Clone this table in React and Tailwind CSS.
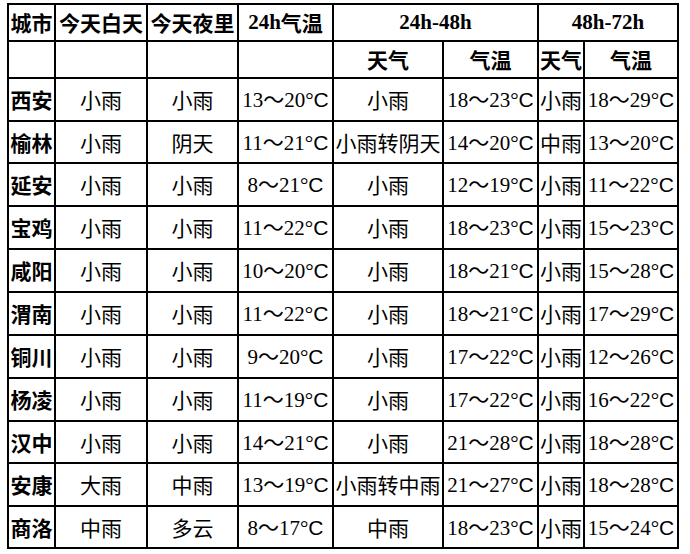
import React from "react";

const rows = [
  ["西安", "小雨", "小雨", "13～20", "小雨", "18～23", "小雨", "18～29"],
  ["榆林", "小雨", "阴天", "11～21", "小雨转阴天", "14～20", "中雨", "13～20"],
  ["延安", "小雨", "小雨", "8～21", "小雨", "12～19", "小雨", "11～22"],
  ["宝鸡", "小雨", "小雨", "11～22", "小雨", "18～23", "小雨", "15～23"],
  ["咸阳", "小雨", "小雨", "10～20", "小雨", "18～21", "小雨", "15～28"],
  ["渭南", "小雨", "小雨", "11～22", "小雨", "18～21", "小雨", "17～29"],
  ["铜川", "小雨", "小雨", "9～20", "小雨", "17～22", "小雨", "12～26"],
  ["杨凌", "小雨", "小雨", "11～19", "小雨", "17～22", "小雨", "16～22"],
  ["汉中", "小雨", "小雨", "14～21", "小雨", "21～28", "小雨", "18～28"],
  ["安康", "大雨", "中雨", "13～19", "小雨转中雨", "21～27", "小雨", "18～28"],
  ["商洛", "中雨", "多云", "8～17", "中雨", "18～23", "小雨", "15～24"],
];

const cjk = "font-['Noto_Sans_CJK_SC',sans-serif]";
const serif = "font-['Liberation_Serif','Noto_Sans_CJK_SC',serif]";
const sans = "font-['Liberation_Sans',sans-serif]";

function Cell({ children, className = "" }) {
  return (
    <div
      className={
        "flex items-center justify-center overflow-visible whitespace-nowrap border-r-2 border-b-2 border-black text-[21px] leading-none text-black " +
        className
      }
    >
      {children}
    </div>
  );
}

function Temp({ value }) {
  const [a, b] = value.split("～");
  return (
    <span className="whitespace-nowrap">
      <span className={serif}>{a}</span>
      <span className={cjk}>～</span>
      <span className={serif}>{b}°</span>
      <span className={sans}>C</span>
    </span>
  );
}

export default function App() {
  return (
    <div className="min-h-[554px] w-[690px] bg-white pl-[7px] pt-[3px]">
      <div className="grid w-[672px] grid-cols-[47px_92px_91px_95px_110px_95px_46px_94px] grid-rows-[37px_37px_43px_42px_43px_43px_43px_43px_43px_43px_42px_43px_42px] border-l-2 border-t-2 border-black">
        <Cell className={cjk + " font-bold"}>城市</Cell>
        <Cell className={cjk + " font-bold"}>今天白天</Cell>
        <Cell className={cjk + " font-bold"}>今天夜里</Cell>
        <Cell className="font-bold">
          <span className={serif}>24h</span>
          <span className={cjk}>气温</span>
        </Cell>
        <Cell className={serif + " col-span-2 font-bold"}>24h-48h</Cell>
        <Cell className={serif + " col-span-2 font-bold"}>48h-72h</Cell>

        <Cell />
        <Cell />
        <Cell />
        <Cell />
        <Cell className={cjk + " font-bold"}>天气</Cell>
        <Cell className={cjk + " font-bold"}>气温</Cell>
        <Cell className={cjk + " font-bold"}>天气</Cell>
        <Cell className={cjk + " font-bold"}>气温</Cell>

        {rows.map((r) => (
          <React.Fragment key={r[0]}>
            <Cell className={cjk + " font-bold"}>{r[0]}</Cell>
            <Cell className={cjk}>{r[1]}</Cell>
            <Cell className={cjk}>{r[2]}</Cell>
            <Cell>
              <Temp value={r[3]} />
            </Cell>
            <Cell className={cjk}>{r[4]}</Cell>
            <Cell>
              <Temp value={r[5]} />
            </Cell>
            <Cell className={cjk}>{r[6]}</Cell>
            <Cell>
              <Temp value={r[7]} />
            </Cell>
          </React.Fragment>
        ))}
      </div>
    </div>
  );
}
